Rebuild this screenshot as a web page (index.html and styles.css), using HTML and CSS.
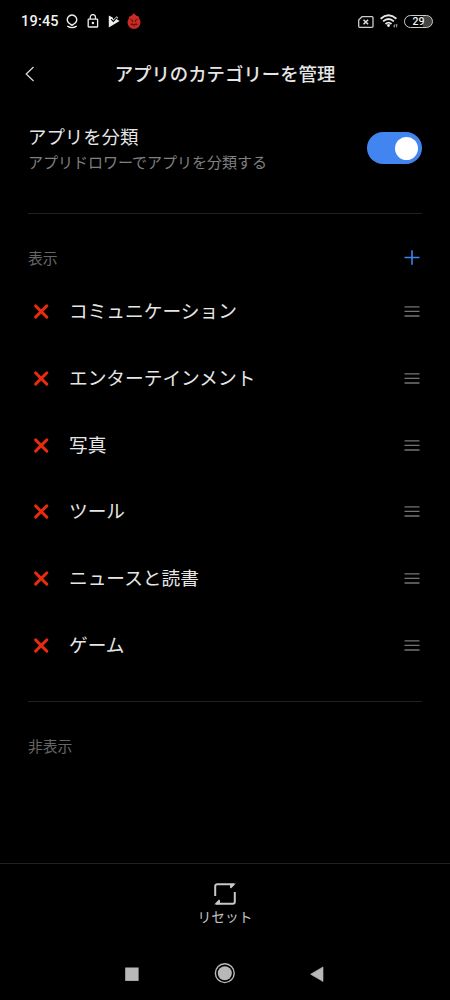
FILE: index.html
```html
<!DOCTYPE html>
<html lang="ja">
<head>
<meta charset="utf-8">
<title>アプリのカテゴリーを管理</title>
<link rel="stylesheet" href="styles.css">
</head>
<body>
<svg width="0" height="0" class="defs">
  <symbol id="remove" viewBox="0 0 16 16"><path d="M2.6 2.9 13.8 14.1M13.8 2.9 2.6 14.1" fill="none" stroke="#e62c0e" stroke-width="2.9" stroke-linecap="round"/></symbol>
  <symbol id="drag" viewBox="0 0 16 12"><path d="M.5 1.8h15M.5 6.4h15M.5 11h15" fill="none" stroke="#747474" stroke-width="1.3"/></symbol>
</svg>
<div class="screen">
  <div class="status">
    <span class="time">19:45</span>
    <svg class="st-person" width="12" height="15" viewBox="0 0 12 15"><path d="M4.3 10.1A4.7 4.7 0 1 1 7.7 10.1L6 11.3ZM1.3 12.2Q6 15 10.7 12.2" fill="none" stroke="#eee" stroke-width="1.4"/></svg>
    <svg class="st-lock" width="12" height="14" viewBox="0 0 12 14"><rect x="1.2" y="5.2" width="9.4" height="7.8" rx=".6" fill="none" stroke="#eee" stroke-width="1.3"/><path d="M3.3 5V3.2a2.6 2.6 0 0 1 5.2 0V5" fill="none" stroke="#eee" stroke-width="1.3"/><circle cx="5.9" cy="9" r="1.2" fill="#eee"/></svg>
    <svg class="st-play" width="12" height="13" viewBox="0 0 12 13"><path d="M.8.5 4.6 2.6 5.4 4.6 8.8 1.2 10 2.6 8.8 4.2 11.6 6 .8 12.5Z" fill="#eee"/><path d="M3.2 4.2 5.3 6.5 9 2.6" fill="none" stroke="#000" stroke-width="1.1"/></svg>
    <svg class="st-fire" width="14" height="16" viewBox="0 0 14 16"><path d="M2.2 3.5 4 3 5.6 1.5 7 .2 8.4 1.8 10 3 11.8 3.5 12 5.3A6.5 6.5 0 1 1 2 5.3Z" fill="#c92b22"/><path d="M3.5 6.5 5.6 7.2V9M10.5 6.5 8.4 7.2V9M3.6 11.6H10.4M5 11.6V9.8M9 11.6V9.8M7 13.5v-2" fill="none" stroke="#5f100d"/></svg>
    <span class="grow"></span>
    <svg class="st-sim" width="16" height="12" viewBox="0 0 16 12"><path d="M4 .7H14a1 1 0 0 1 1 1v8.6a1 1 0 0 1-1 1H1.7a1 1 0 0 1-1-1V4Z" fill="none" stroke="#ccc" stroke-width="1.3"/><path d="M5.5 3.7l4.6 4.6M10.1 3.7 5.5 8.3" stroke="#ddd" stroke-width="1.5"/></svg>
    <svg class="st-wifi" width="18" height="14" viewBox="0 0 18 14"><path d="M.6 4.7Q8.5-2.2 16.4 4.7M3.1 7.4Q8.5 2.6 13.9 7.4M5.5 10Q8.5 7.3 11.5 10" fill="none" stroke="#e8e8e8" stroke-width="1.8"/><circle cx="8.5" cy="11.5" r="1.4" fill="#eee"/><path d="M14.4 10.4v3M16.6 10.4v3M13.3 12.2h1M15.5 11h2" stroke="#aaa" stroke-width=".9"/></svg>
    <span class="battery">29</span>
  </div>
  <header class="header">
    <svg width="10" height="16" viewBox="0 0 10 16"><path d="M8.5 1 1.2 8l7.3 7" fill="none" stroke="#ddd" stroke-width="1.2"/></svg>
    <h1>アプリのカテゴリーを管理</h1>
  </header>
  <section class="setting">
    <div>
      <div class="setting-title">アプリを分類</div>
      <div class="setting-sub">アプリドロワーでアプリを分類する</div>
    </div>
    <span class="toggle"><span class="knob"></span></span>
  </section>
  <div class="section-head">
    <span>表示</span>
    <svg width="16" height="16" viewBox="0 0 16 16"><path d="M8 .2v14.6M.5 7.5h15" stroke="#3f84ee" stroke-width="1.6"/></svg>
  </div>
  <ul class="list">
    <li><svg class="x"><use href="#remove"/></svg><span>コミュニケーション</span><svg class="drag"><use href="#drag"/></svg></li>
    <li><svg class="x"><use href="#remove"/></svg><span>エンターテインメント</span><svg class="drag"><use href="#drag"/></svg></li>
    <li><svg class="x"><use href="#remove"/></svg><span>写真</span><svg class="drag"><use href="#drag"/></svg></li>
    <li><svg class="x"><use href="#remove"/></svg><span>ツール</span><svg class="drag"><use href="#drag"/></svg></li>
    <li><svg class="x"><use href="#remove"/></svg><span>ニュースと読書</span><svg class="drag"><use href="#drag"/></svg></li>
    <li><svg class="x"><use href="#remove"/></svg><span>ゲーム</span><svg class="drag"><use href="#drag"/></svg></li>
  </ul>
  <div class="section-head hidden-head"><span>非表示</span></div>
  <footer class="footer">
    <svg width="22" height="22" viewBox="0 0 22 22"><path d="M1.2 13V3.2a2 2 0 0 1 2-2H20M20.8 9v9.8a2 2 0 0 1-2 2H2" fill="none" stroke="#c8c8c8" stroke-width="2"/><path d="M21.8.4 17 5.6 16 4.6V1ZM.2 21.6 5 16.4 6 17.4V21Z" fill="#c8c8c8"/></svg>
    <span>リセット</span>
  </footer>
  <nav class="nav">
    <svg width="14" height="14" viewBox="0 0 14 14"><rect x=".2" y=".5" width="13.4" height="13.4" fill="#b8b8b8"/></svg>
    <svg width="22" height="22" viewBox="0 0 22 22"><circle cx="10.8" cy="10.2" r="9.4" fill="none" stroke="#bbb" stroke-width="1.4"/><circle cx="10.8" cy="10.2" r="7" fill="#b8b8b8"/></svg>
    <svg width="14" height="16" viewBox="0 0 14 16"><path d="M.6 8.2 13 .9v14.6Z" fill="#b8b8b8" stroke="#b8b8b8" stroke-width=".6" stroke-linejoin="round"/></svg>
  </nav>
</div>
</body>
</html>
```
FILE: styles.css
```css
* { box-sizing: border-box; }
body { margin: 0; background: #000; color: #e6e6e6; font-family: "Noto Sans CJK JP", sans-serif; }
svg { display: block; flex: none; }
.defs { position: absolute; }
.screen { width: 450px; height: 1000px; display: flex; flex-direction: column; overflow: hidden; }
.screen > * { flex: none; }
.status { height: 42px; padding: 0 18px 0 21px; display: flex; align-items: center; }
.time { width: 45px; font: 500 14.5px/20px Roboto, sans-serif; letter-spacing: .2px; color: #f2f2f2; padding-top: 2px; }
.st-lock { margin-left: 9px; }
.st-play { margin-left: 9px; }
.st-fire { margin-left: 7px; }
.grow { flex: 1; }
.st-sim { margin-right: 6px; }
.st-wifi { margin-right: 6px; }
.status .st-sim { margin-top: 1px; }
.battery { width: 29px; height: 13px; margin-top: 1px; margin-right: -1px; border: 1.5px solid #ccc; border-radius: 7px; background: linear-gradient(90deg, #000 66%, #444 66%); font: 500 10.5px/11px Roboto, sans-serif; color: #f2f2f2; text-align: center; }
.header { height: 63px; padding: 0 25px; display: grid; grid-template-columns: 10px 1fr 10px; align-items: center; }
h1 { margin: 0; padding-bottom: 2px; font-size: 18.4px; font-weight: 500; line-height: 28px; text-align: center; white-space: nowrap; }
.setting { height: 109px; margin: 0 28px; padding-top: 18px; display: flex; justify-content: space-between; align-items: flex-start; border-bottom: 1px solid #202020; }
.setting-title { font-size: 18.4px; line-height: 26px; }
.setting-sub { padding-top: 1px; font-size: 15px; line-height: 24px; color: #808080; }
.toggle { width: 55px; height: 32px; margin-top: 9px; padding: 0 4px; border-radius: 16px; background: #4284f0; display: flex; align-items: center; justify-content: flex-end; }
.knob { width: 23px; height: 23px; border-radius: 50%; background: #fff; }
.section-head { height: 64px; padding: 24px 30px 0 28px; display: flex; align-items: center; justify-content: space-between; font-size: 14.8px; line-height: 22px; color: #666; }
.list { list-style: none; height: 424px; margin: 0 28px; padding: 0 0 23px; border-bottom: 1px solid #202020; display: grid; grid-template-rows: repeat(6, 1fr); }
.list li { display: flex; align-items: center; font-size: 18.7px; line-height: 28px; }
.list span { flex: 1; padding-bottom: 2px; }
.x { width: 16px; height: 16px; margin: 0 20px 0 5px; }
.drag { width: 16px; height: 12px; margin-right: 2px; }
.footer { height: 85px; margin-top: auto; padding-top: 19px; border-top: 1px solid #202020; display: flex; flex-direction: column; align-items: center; font-size: 13.7px; line-height: 22px; color: #c4c4c4; }
.nav { height: 52px; padding: 0 126px 0 125px; display: flex; align-items: center; justify-content: space-between; }
```
